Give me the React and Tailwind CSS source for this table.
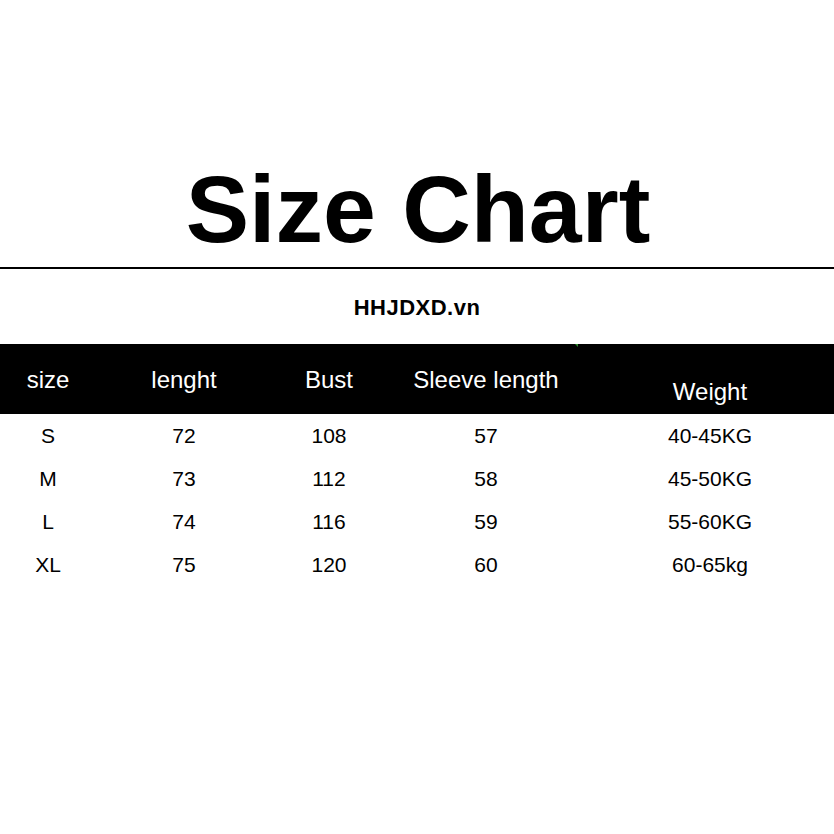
const columnas = [
  { key: "size", titulo: "size", ancho: "w-[96px]" },
  { key: "lenght", titulo: "lenght", ancho: "w-[176px]" },
  { key: "bust", titulo: "Bust", ancho: "w-[114px]" },
  { key: "sleeve", titulo: "Sleeve length", ancho: "w-[200px]" },
  { key: "weight", titulo: "Weight", ancho: "w-[248px]" },
];

const filas = [
  { size: "S", lenght: "72", bust: "108", sleeve: "57", weight: "40-45KG" },
  { size: "M", lenght: "73", bust: "112", sleeve: "58", weight: "45-50KG" },
  { size: "L", lenght: "74", bust: "116", sleeve: "59", weight: "55-60KG" },
  { size: "XL", lenght: "75", bust: "120", sleeve: "60", weight: "60-65kg" },
];

function App() {
  return (
    <main className="h-[834px] w-[834px] overflow-hidden bg-white font-['Liberation_Sans',Arial,sans-serif] text-black">
      <h1 className="mt-[162px] pl-[2px] text-center text-[95px] font-bold leading-none">
        Size Chart
      </h1>

      <div className="mt-[10px] h-[2px] w-full bg-black" />

      <p className="mt-[28px] text-center text-[22px] font-bold leading-none tracking-[0.5px]">
        HHJDXD.vn
      </p>

      <section className="mt-[25px]">
        <div className="relative flex h-[70px] bg-black text-[24px] leading-none text-white">
          {columnas.map((col) => (
            <div
              key={col.key}
              className={`${col.ancho} text-center ${
                col.key === "weight" ? "pt-[36px]" : "pt-[24px]"
              }`}
            >
              {col.titulo}
            </div>
          ))}
          <span className="absolute left-[575px] top-0 h-0 w-0 border-l-[3px] border-t-[3px] border-l-transparent border-t-[#2e8b2e]" />
        </div>

        <div className="text-[21px]">
          {filas.map((fila, index) => (
            <div key={index} className="flex h-[43px] items-center">
              {columnas.map((col) => (
                <div key={col.key} className={`${col.ancho} text-center`}>
                  {fila[col.key]}
                </div>
              ))}
            </div>
          ))}
        </div>
      </section>
    </main>
  );
}

export default App;
